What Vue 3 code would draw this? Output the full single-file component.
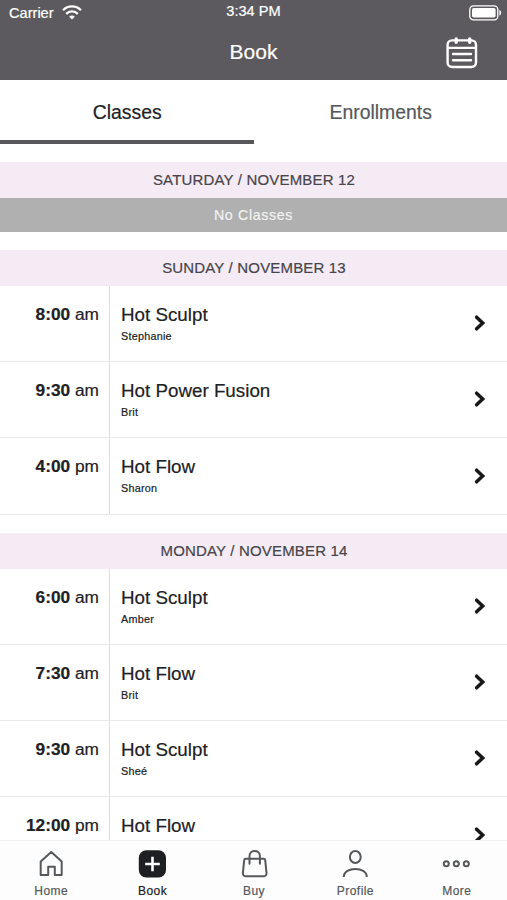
<script setup>
const days = [
  { title: 'SATURDAY / NOVEMBER 12', classes: [] },
  {
    title: 'SUNDAY / NOVEMBER 13',
    classes: [
      { time: '8:00', period: 'am', name: 'Hot Sculpt', teacher: 'Stephanie' },
      { time: '9:30', period: 'am', name: 'Hot Power Fusion', teacher: 'Brit' },
      { time: '4:00', period: 'pm', name: 'Hot Flow', teacher: 'Sharon' },
    ],
  },
  {
    title: 'MONDAY / NOVEMBER 14',
    classes: [
      { time: '6:00', period: 'am', name: 'Hot Sculpt', teacher: 'Amber' },
      { time: '7:30', period: 'am', name: 'Hot Flow', teacher: 'Brit' },
      { time: '9:30', period: 'am', name: 'Hot Sculpt', teacher: 'Sheé' },
      { time: '12:00', period: 'pm', name: 'Hot Flow', teacher: '' },
    ],
  },
]
const tabs = ['Home', 'Book', 'Buy', 'Profile', 'More']
</script>

<template>
  <div class="screen">
    <header class="top">
      <div class="status">
        <div class="carrier">
          <span>Carrier</span>
          <svg class="wifi" width="20" height="15" viewBox="0 0 20 15" fill="none" stroke="#fff" stroke-width="2.3">
            <path d="M1 5.2C6 .2 14 .2 19 5.2" />
            <path d="M4.2 8.8c3.3-3.2 8.3-3.2 11.6 0" />
            <path d="M10 14.6 7.100 11.700c1.600-1.600 4.200-1.600 5.800 0z" fill="#fff" stroke="none" />
          </svg>
        </div>
        <span class="clock">3:34 PM</span>
        <svg class="battery" width="33" height="16" viewBox="0 0 33 16">
          <rect x=".8" y=".8" width="28" height="14" rx="3.6" fill="none" stroke="#fff" stroke-width="1.3" />
          <rect x="3" y="3" width="23.6" height="9.6" rx="1.8" fill="#fff" />
          <path d="M30.4 5v5.6c2.4-.8 2.4-4.8 0-5.6z" fill="#fff" />
        </svg>
      </div>
      <div class="titlebar">
        <h1>Book</h1>
        <svg class="calendar" width="32" height="32" viewBox="0 0 32 32" fill="none" stroke="#fff" stroke-width="2.4" stroke-linecap="round">
          <rect x="1.6" y="3.4" width="28.4" height="26.6" rx="4.5" />
          <path d="M2 10.9h28" />
          <path d="M10.2 2v3.200M23.700 2v3.200" stroke-width="3.400" />
          <path d="M7 17h18M7 23.3h18" />
        </svg>
      </div>
    </header>

    <nav class="modes">
      <div class="mode active">Classes</div>
      <div class="mode">Enrollments</div>
    </nav>

    <main class="schedule">
      <section v-for="day in days" :key="day.title" class="day">
        <h2>{{ day.title }}</h2>
        <div v-if="!day.classes.length" class="empty">No Classes</div>
        <div v-for="item in day.classes" :key="item.time" class="row">
          <div class="time"><b>{{ item.time }}</b> {{ item.period }}</div>
          <div class="info">
            <div class="name">{{ item.name }}</div>
            <div class="teacher">{{ item.teacher }}</div>
          </div>
          <svg class="chevron" width="12" height="18" viewBox="0 0 12 18" fill="none" stroke="#17181a" stroke-width="3.5" stroke-linecap="round">
            <path d="M2.600 3.200 8.700 9 2.600 14.800" />
          </svg>
        </div>
      </section>
    </main>

    <nav class="tabbar">
      <div v-for="tab in tabs" :key="tab" class="tab" :class="{ current: tab === 'Book' }">
        <svg width="30" height="30" viewBox="0 0 30 30" fill="none" stroke="#55585b" stroke-width="2">
          <path v-if="tab === 'Home'" d="M4.7 12.6 15.3 3l10.4 9.600v13.400h-6.900v-8.300h-6.600v8.300H4.700z" stroke-linejoin="round" />
          <template v-else-if="tab === 'Book'">
            <rect x="1.800" y="1.300" width="27.200" height="27.200" rx="7.500" fill="#1d1f23" stroke="none" />
            <path d="M15.500 7.700v14.600M8.200 15h14.600" stroke="#fff" stroke-width="2.600" />
          </template>
          <template v-else-if="tab === 'Buy'">
            <path d="M6.800 9.700h17.800c1 0 1.500.500 1.600 1.400l1.300 12.700c.200 2-.700 3.400-2.700 3.400H6.600c-2 0-2.900-1.400-2.700-3.400l1.300-12.700c.100-.900.600-1.400 1.600-1.400z" />
            <path d="M10.500 14.800V7c0-6.600 10.400-6.600 10.400 0v7.800" stroke-linecap="round" />
          </template>
          <template v-else-if="tab === 'Profile'">
            <ellipse cx="15.300" cy="8" rx="5.400" ry="6" />
            <path d="M3.800 28c0-10.800 23-10.800 23 0" />
          </template>
          <template v-else>
            <circle cx="5.300" cy="14.800" r="2.500" />
            <circle cx="15.300" cy="14.800" r="2.500" />
            <circle cx="25.300" cy="14.800" r="2.500" />
          </template>
        </svg>
        <span>{{ tab }}</span>
      </div>
    </nav>
  </div>
</template>

<style>
body {
  margin: 0;
  overflow: hidden;
}
</style>

<style scoped>
.screen {
  width: 507px;
  height: 900px;
  display: flex;
  flex-direction: column;
  overflow: hidden;
  background: #fff;
  color: #202124;
  font-family: "Liberation Sans", Arial, sans-serif;
  -webkit-text-stroke: 0.2px currentColor;
}
.top {
  flex: none;
  height: 80px;
  background: #5c5a5e;
  color: #fff;
}
.status {
  height: 25px;
  display: grid;
  grid-template-columns: 1fr auto 1fr;
  align-items: center;
  padding: 0 5px 0 9px;
  font-size: 14.6px;
}
.carrier {
  display: flex;
  align-items: center;
  gap: 8px;
}
.clock {
  padding-right: 4px;
  line-height: 23px;
  height: 25px;
}
.battery {
  justify-self: end;
}
.titlebar {
  height: 55px;
  display: grid;
  grid-template-columns: 1fr auto 1fr;
  align-items: center;
  padding: 0 29px;
}
h1 {
  grid-column: 2;
  margin: 0;
  font-size: 21px;
  font-weight: 400;
  height: 55px;
  line-height: 53px;
}
.calendar {
  justify-self: end;
}
.modes {
  flex: none;
  display: flex;
  height: 64px;
}
.mode {
  flex: 1;
  box-sizing: border-box;
  border-bottom: 4px solid transparent;
  padding-left: 1px;
  text-align: center;
  font-size: 19.4px;
  line-height: 65px;
  color: #55585b;
}
.mode.active {
  color: #202124;
  border-color: #58585b;
}
.schedule {
  flex: 1;
  min-height: 0;
  overflow: hidden;
  display: flex;
  flex-direction: column;
  gap: 18px;
  padding-top: 18px;
}
.day {
  flex: none;
}
h2 {
  margin: 0;
  height: 36px;
  padding-left: 1px;
  line-height: 36px;
  background: #f5ebf5;
  color: #47444a;
  text-align: center;
  font-size: 15px;
  font-weight: 400;
  letter-spacing: 0.17px;
}
.empty {
  height: 34px;
  line-height: 34px;
  background: #b0b0b0;
  color: #f2f2f2;
  text-align: center;
  font-size: 14.2px;
  letter-spacing: 0.65px;
}
.row {
  display: grid;
  grid-template-columns: 110px 1fr auto;
  height: 76px;
  box-sizing: border-box;
  border-bottom: 1px solid #e7e9ea;
}
.row:last-child {
  height: 77px;
}
.time {
  box-sizing: border-box;
  border-right: 1px solid #dcdee0;
  padding: 17px 10px 0 0;
  text-align: right;
  font-size: 17.3px;
  line-height: 22px;
}
.info {
  padding: 17px 0 0 11px;
}
.name {
  font-size: 18.8px;
  line-height: 23px;
}
.teacher {
  padding-top: 3px;
  font-size: 10.8px;
  line-height: 14px;
  letter-spacing: 0.25px;
}
.chevron {
  align-self: center;
  margin: 0 21px 1px 0;
}
.tabbar {
  flex: none;
  box-sizing: border-box;
  height: 60px;
  display: flex;
  border-top: 1px solid #f1f2f2;
  background: #fdfdfd;
}
.tab {
  flex: 1;
  display: flex;
  flex-direction: column;
  align-items: center;
  padding-top: 8px;
  gap: 5px;
  font-size: 12px;
  line-height: 14px;
  letter-spacing: 0.45px;
  color: #55585b;
}
.tab span {
  padding-left: 1px;
}
.tab.current {
  color: #202124;
}
</style>
